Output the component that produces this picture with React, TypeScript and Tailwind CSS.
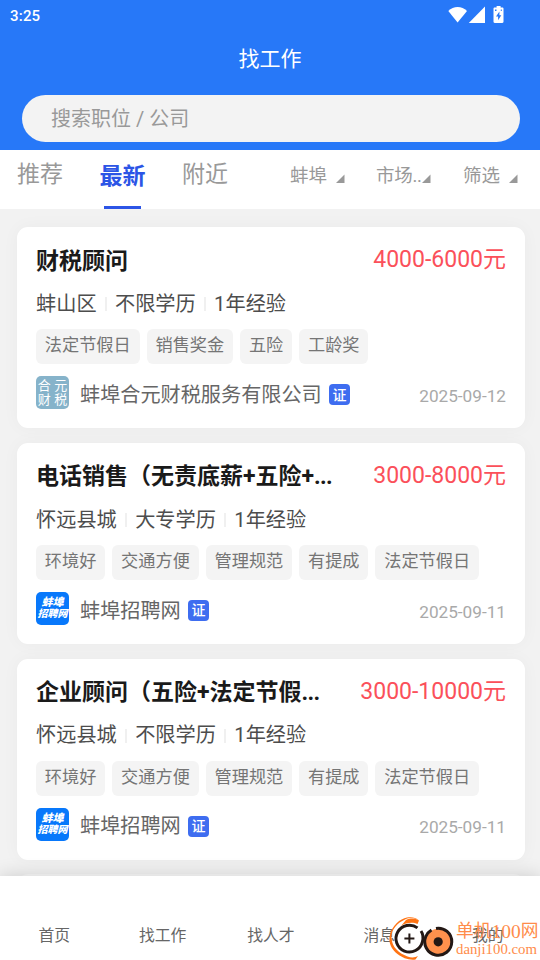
type Job = {
  title: string;
  salary: string;
  meta: string[];
  tags: string[];
  company: string;
  logo: "heyuan" | "zhaopin";
  date: string;
};

const jobs: Job[] = [
  {
    title: "财税顾问",
    salary: "4000-6000元",
    meta: ["蚌山区", "不限学历", "1年经验"],
    tags: ["法定节假日", "销售奖金", "五险", "工龄奖"],
    company: "蚌埠合元财税服务有限公司",
    logo: "heyuan",
    date: "2025-09-12",
  },
  {
    title: "电话销售（无责底薪+五险+...",
    salary: "3000-8000元",
    meta: ["怀远县城", "大专学历", "1年经验"],
    tags: ["环境好", "交通方便", "管理规范", "有提成", "法定节假日"],
    company: "蚌埠招聘网",
    logo: "zhaopin",
    date: "2025-09-11",
  },
  {
    title: "企业顾问（五险+法定节假...",
    salary: "3000-10000元",
    meta: ["怀远县城", "不限学历", "1年经验"],
    tags: ["环境好", "交通方便", "管理规范", "有提成", "法定节假日"],
    company: "蚌埠招聘网",
    logo: "zhaopin",
    date: "2025-09-11",
  },
];

const navItems = ["首页", "找工作", "找人才", "消息", "我的"];

function StatusIcons() {
  return (
    <svg width="60" height="20" viewBox="0 0 60 20" fill="#fff">
      <path d="M0.3 5C5.5 -0.2 13.8 -0.2 19 5L9.6 16.500z" />
      <path d="M37 0.500v16.500H20.8z" />
      <path d="M48.600 0h4v1.400h1.700c.7 0 1.200.5 1.200 1.200v13.200c0 .7-.5 1.200-1.200 1.200h-7.600c-.7 0-1.200-.5-1.200-1.200V2.600c0-.7.5-1.200 1.200-1.200h1.900z" />
      <path d="M51.400 5.500l-3.400 5h2.100v3.800l3.200-5h-1.900z" fill="#2778f8" />
      <path d="M47 3.500h1.500v1.500H47zM52.800 3.500h1v1.500h-1z" fill="#2778f8" />
    </svg>
  );
}

function Header() {
  return (
    <header className="flex h-[150px] shrink-0 flex-col bg-[#2778f8] text-white">
      <div className="flex h-[32px] items-center justify-between pl-[10px] pr-[32px]">
        <span className="text-[15px] font-medium leading-none tracking-[0.2px]">3:25</span>
        <StatusIcons />
      </div>
      <h1 className="flex h-[56px] items-center justify-center pb-[2px] text-[21px] leading-none">找工作</h1>
      <div className="ml-[22px] mt-[7px] flex h-[47px] w-[498px] items-center rounded-full bg-[#f3f3f3] pl-[29px] pt-px text-[20px] leading-none text-[#999]">
        搜索职位 / 公司
      </div>
    </header>
  );
}

function Filter({ label, className }: { label: string; className: string }) {
  return (
    <div className={`flex h-[53px] items-center justify-between text-[18.500px] leading-none text-[#999] ${className}`}>
      <span className="whitespace-nowrap">{label}</span>
      <svg className="mt-[4px] shrink-0" width="9" height="9" viewBox="0 0 9 9" fill="#999">
        <path d="M8.500 0.500v8.500H0z" />
      </svg>
    </div>
  );
}

function Tabs() {
  return (
    <div className="flex h-[59px] shrink-0 bg-white pl-[17px] text-[23px] leading-none text-[#999]">
      <div className="flex h-[48px] w-[46px] items-center">推荐</div>
      <div className="ml-[36px] flex w-[47px] flex-col items-center font-bold text-[#2c55e6]">
        <span className="flex h-[52px] items-center">最新</span>
        <span className="mt-[4px] h-[3px] w-[37px] bg-[#2c55e6]" />
      </div>
      <div className="ml-9 flex h-[48px] w-[46px] items-center">附近</div>
      <Filter label="蚌埠" className="ml-[62px] w-[55px]" />
      <Filter label="市场.." className="ml-[31px] w-[55px] tracking-[-0.300px]" />
      <Filter label="筛选" className="ml-[32px] w-[54.500px]" />
    </div>
  );
}

function CompanyLogo({ kind }: { kind: Job["logo"] }) {
  if (kind === "heyuan") {
    return (
      <div className="grid h-[33px] w-[33px] shrink-0 grid-cols-2 content-center justify-items-center gap-x-[2px] rounded-[5px] bg-[#86b3ca] px-[1px] text-[13px] leading-[13.500px] text-white">
        <span>合</span>
        <span>元</span>
        <span>财</span>
        <span>税</span>
      </div>
    );
  }
  return (
    <div className="flex h-[33px] w-[33px] shrink-0 flex-col items-center justify-center rounded-[5px] bg-[#0878fb] pt-px text-[10px] font-black italic leading-[10.500px] text-white">
      <span className="whitespace-nowrap text-[11px]">蚌埠</span>
      <span className="whitespace-nowrap">招聘网</span>
    </div>
  );
}

function JobTitle({ title }: { title: string }) {
  const cut = title.endsWith("...");
  return (
    <h2 className="whitespace-nowrap pt-[4px] text-[23px] font-bold text-[#1a1a1a]">
      {cut ? title.slice(0, -3) : title}
      {cut && <span className="tracking-[-0.700px]">...</span>}
    </h2>
  );
}

function JobCard({ job }: { job: Job }) {
  return (
    <article className="flex h-[201.400px] shrink-0 flex-col rounded-[11px] bg-white px-[19px] pt-[17px] shadow-[0_0_18px_rgba(0,0,0,0.035)]">
      <div className="flex h-[30px] items-center justify-between leading-none">
        <JobTitle title={job.title} />
        <span className="whitespace-nowrap pt-px text-[23px] text-[#fb505a]">{job.salary}</span>
      </div>
      <div className="mt-[20px] flex h-5 items-center text-[20.200px] leading-none text-[#4d4d4d]">
        {job.meta.map((m, i) => (
          <div key={m} className="flex items-center">
            {i > 0 && <span className="mx-[8.200px] h-[14px] w-[2px] bg-[#f0f0f0]" />}
            <span className="whitespace-nowrap">{m}</span>
          </div>
        ))}
      </div>
      <div className="mt-[15px] flex gap-[7.100px]">
        {job.tags.map((t) => (
          <span
            key={t}
            className="flex h-[35px] items-center whitespace-nowrap rounded-[6px] bg-[#f4f4f4] px-[8.800px] pb-px text-[17.200px] leading-none text-[#757575]"
          >
            {t}
          </span>
        ))}
      </div>
      <div className="mt-3 flex h-[33px] items-center">
        <CompanyLogo kind={job.logo} />
        <span className="ml-[11px] whitespace-nowrap pt-[5px] text-[20.150px] leading-none text-[#666]">{job.company}</span>
        <span className="ml-[7.200px] mt-[4px] flex h-[21px] w-[21px] shrink-0 items-center justify-center rounded-[4px] bg-[#3e6df0] text-[14px] font-medium leading-none text-white">
          证
        </span>
        <span className="ml-auto mt-[8px] text-[17.200px] leading-none text-[#a9a9a9]">{job.date}</span>
      </div>
    </article>
  );
}

function Watermark() {
  return (
    <div className="flex h-[48px] w-[154px]">
      <svg className="shrink-0" width="70" height="48" viewBox="0 0 70 48" fill="none">
        <path
          d="M33 8.500C29 6 24 5 19 7.500 11 11 5 18 5.500 26c.5 9 7 15 16 18.500 4 1.500 8 1 10.500-.5l-2.500 3.500c-6 1-13-1.500-18-5.500C5 37 2 30 4 22.500 6 14 14 6.500 21 5.500c5-.5 9 0 12 3z"
          fill="#ff7414"
        />
        <circle cx="23.400" cy="26.600" r="14" fill="#fff" />
        <path d="M31.500 15.900A13.400 13.400 0 1 0 36.400 29.800C37.500 26 37 22 35 19" stroke="#231815" strokeWidth="3" />
        <path d="M20 8C25 5.500 30 6.500 33 8.500L31.500 12C27 10 20 10.500 15 14z" fill="#ff7414" />
        <circle cx="52.200" cy="29.800" r="13" fill="#ff914d" />
        <path d="M50 16.400A13.500 13.500 0 1 1 39.800 24.500C41 21.500 43 19.500 45.500 18" stroke="#231815" strokeWidth="3" />
        <circle cx="52.200" cy="29.800" r="4.600" fill="#231815" />
        <path d="M23.400 21.500v10M18.400 26.500h10" stroke="#231815" strokeWidth="2" />
      </svg>
      <div className="flex flex-col pt-[9px] font-['Liberation_Serif','Noto_Sans_CJK_SC',serif] text-[#ff8c4a]">
        <span className="flex h-[21px] items-center whitespace-nowrap text-[17.800px] leading-[21px]">
          单机<span className="text-[19.500px]">100</span>网
        </span>
        <span className="whitespace-nowrap text-[14.800px] leading-[15px]">danji100.com</span>
      </div>
    </div>
  );
}

export default function App() {
  return (
    <div className="relative flex h-[960px] w-[540px] flex-col overflow-hidden bg-[#f2f2f2] font-[Roboto,'Noto_Sans_CJK_SC',sans-serif]">
      <Header />
      <Tabs />
      <main className="flex min-h-0 flex-1 flex-col gap-[14.400px] overflow-hidden pl-[17px] pr-[15px] pt-[18px]">
        {jobs.map((job) => (
          <JobCard key={job.title} job={job} />
        ))}
        <div className="h-[201px] shrink-0 rounded-[11px] bg-white/50" />
      </main>
      <nav className="z-10 flex h-[84px] shrink-0 bg-white pt-[52px] text-[15.800px] leading-none text-[#666] shadow-[0_0_18px_rgba(0,0,0,0.16)]">
        {navItems.map((item) => (
          <span key={item} className="w-[108.400px] shrink-0 text-center">
            {item}
          </span>
        ))}
      </nav>
      <div className="absolute bottom-0 right-0 z-20">
        <Watermark />
      </div>
    </div>
  );
}
